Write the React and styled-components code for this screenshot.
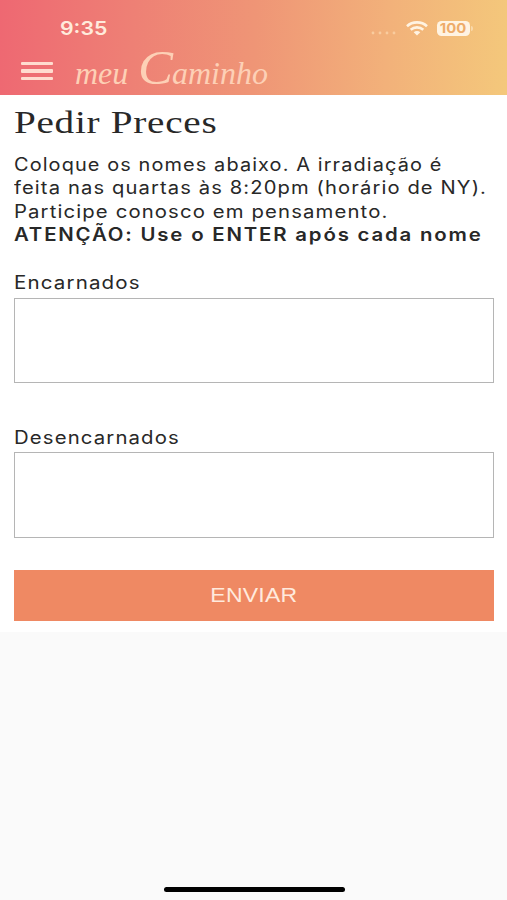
import React from 'react';
import styled, { createGlobalStyle } from 'styled-components';

const Global = createGlobalStyle`
  * { box-sizing: border-box; }
  body { margin: 0; background: #fafafa; }
`;
const Screen = styled.div`
  width: 507px;
  height: 900px;
  display: flex;
  flex-direction: column;
  background: #fafafa;
  color: #282828;
  font-family: Inter, sans-serif;
  overflow: hidden;
`;
const Header = styled.header`
  height: 94.5px;
  flex: none;
  background: linear-gradient(93deg, #ee6872 0%, #ee8075 26%, #ef9576 50%, #f2b17a 76%, #f4c87b 100%);
  color: #ffebdc;
`;
const StatusBar = styled.div`
  height: 48px;
  padding: 8px 34px 0 60px;
  display: flex;
  align-items: center;
`;
const Stretch = styled.span`
  display: block;
  width: max-content;
  white-space: pre;
  transform: scaleX(${(p) => p.$x || 1});
  transform-origin: ${(p) => p.$origin || 'left'} center;
  letter-spacing: ${(p) => p.$gap || 0}px;
`;
const Clock = styled.div`
  flex: 1;
  font-size: 18.5px;
  font-weight: 600;
  line-height: 25px;
`;
const StatusIcons = styled.div`
  display: flex;
  align-items: center;
`;
const Signal = styled.svg`
  margin: 10px 10px 0 0;
`;
const Battery = styled.div`
  width: 33px;
  height: 15px;
  margin-left: 9px;
  border-radius: 4.5px;
  background: #fff3e2;
  color: #eeab69;
  display: flex;
  justify-content: center;
  font-size: 13.5px;
  font-weight: 700;
  line-height: 15.5px;
`;
const BatteryCap = styled.span`
  width: 2px;
  height: 5px;
  margin-left: 1px;
  border-radius: 0 2px 2px 0;
  background: #f9d9aa;
`;
const NavBar = styled.div`
  height: 46px;
  padding-left: 21px;
  display: flex;
  align-items: flex-start;
`;
const MenuButton = styled.button`
  width: 32px;
  height: 18px;
  margin: 14px 22px 0 0;
  padding: 0;
  border: 0;
  background: none;
  display: flex;
  flex-direction: column;
  justify-content: space-between;
`;
const MenuBar = styled.span`
  width: 32px;
  height: 3.4px;
  border-radius: 1px;
  background: #ffdccf;
`;
const Brand = styled.div`
  display: flex;
  align-items: baseline;
  font-family: 'Liberation Serif', serif;
  font-style: italic;
  font-size: 32px;
  line-height: 40px;
  color: #fdd0b6;
`;
const BrandCapital = styled.span`
  display: inline-block;
  margin: 0 1px 0 10px;
  font-size: 49px;
  line-height: 40px;
  transform: scaleX(1.07);
  transform-origin: left;
`;
const Form = styled.main`
  height: 537.5px;
  flex: none;
  padding: 8px 13px 0 13.5px;
  background: #fff;
  display: flex;
  flex-direction: column;
`;
const Title = styled.h1`
  margin: 0;
  height: 50px;
  font: 400 32.5px/39px 'Liberation Serif', serif;
`;
const Intro = styled.div`
  height: 94.5px;
  padding-left: 0.5px;
  font-size: 18px;
  line-height: 23.6px;
`;
const Strong = styled.strong`
  display: block;
  font-weight: 600;
`;
const Label = styled.label`
  height: 27.5px;
  margin-top: ${(p) => p.$top}px;
  padding-left: 0.5px;
  font-size: 18px;
  line-height: 25px;
`;
const Field = styled.textarea`
  display: block;
  width: 100%;
  height: 85.5px;
  flex: none;
  border: 1.5px solid #b5b5b5;
  border-radius: 0;
  background: #fff;
  resize: none;
  outline: none;
`;
const Submit = styled.button`
  height: 51px;
  flex: none;
  margin-top: 32px;
  padding: 0;
  border: 0;
  background: #ef8963;
  color: #ffeadd;
  display: flex;
  justify-content: center;
  align-items: center;
  font: 400 20px/24px 'Liberation Sans', sans-serif;
`;
const HomeArea = styled.footer`
  flex: 1;
  display: flex;
  justify-content: center;
  align-items: flex-end;
  padding: 0 0 8px 1px;
`;
const HomeIndicator = styled.div`
  width: 181px;
  height: 5.5px;
  border-radius: 3px;
  background: #000;
`;

const intro = [
  { text: 'Coloque os nomes abaixo. A irradiação é', x: 1.106, gap: 1 },
  { text: 'feita nas quartas às 8:20pm (horário de NY).', x: 1.12, gap: 1 },
  { text: 'Participe conosco em pensamento.', x: 1.128, gap: 1 },
];

export default function App() {
  return (
    <>
      <Global />
      <Screen>
        <Header>
          <StatusBar>
            <Clock><Stretch $x={1.15}>9:35</Stretch></Clock>
            <StatusIcons>
              <Signal width="25" height="4" viewBox="0 0 25 4" fill="#f9cc9e">
                <circle cx="2" cy="2" r="1.4" /><circle cx="9" cy="2" r="1.4" />
                <circle cx="16" cy="2" r="1.4" /><circle cx="23" cy="2" r="1.4" />
              </Signal>
              <svg width="22" height="15" viewBox="0 0 22 15" fill="none" stroke="#fff3e2" strokeWidth="2.6">
                <path d="M1 5.2C6.5.1 15.5.1 21 5.2" />
                <path d="M4.7 8.8C8.3 5.5 13.7 5.5 17.3 8.8" />
                <path d="M11 14.4 7.7 11.3C9.5 9.7 12.5 9.7 14.3 11.3Z" fill="#fff3e2" stroke="none" />
              </svg>
              <Battery><Stretch $x={1.1} $origin="center">100</Stretch></Battery>
              <BatteryCap />
            </StatusIcons>
          </StatusBar>
          <NavBar>
            <MenuButton aria-label="Menu"><MenuBar /><MenuBar /><MenuBar /></MenuButton>
            <Brand>meu<BrandCapital>C</BrandCapital>aminho</Brand>
          </NavBar>
        </Header>
        <Form>
          <Title><Stretch $x={1.205} $gap={0.6}>Pedir Preces</Stretch></Title>
          <Intro>
            {intro.map((line) => (
              <Stretch key={line.text} $x={line.x} $gap={line.gap}>{line.text}</Stretch>
            ))}
            <Strong><Stretch $x={1.133} $gap={1.6}>ATENÇÃO: Use o ENTER após cada nome</Stretch></Strong>
          </Intro>
          <Label $top={23} htmlFor="encarnados"><Stretch $x={1.14} $gap={1}>Encarnados</Stretch></Label>
          <Field id="encarnados" />
          <Label $top={41.5} htmlFor="desencarnados"><Stretch $x={1.13} $gap={1}>Desencarnados</Stretch></Label>
          <Field id="desencarnados" />
          <Submit><Stretch $x={1.15} $gap={0.2} $origin="center">ENVIAR</Stretch></Submit>
        </Form>
        <HomeArea><HomeIndicator /></HomeArea>
      </Screen>
    </>
  );
}
